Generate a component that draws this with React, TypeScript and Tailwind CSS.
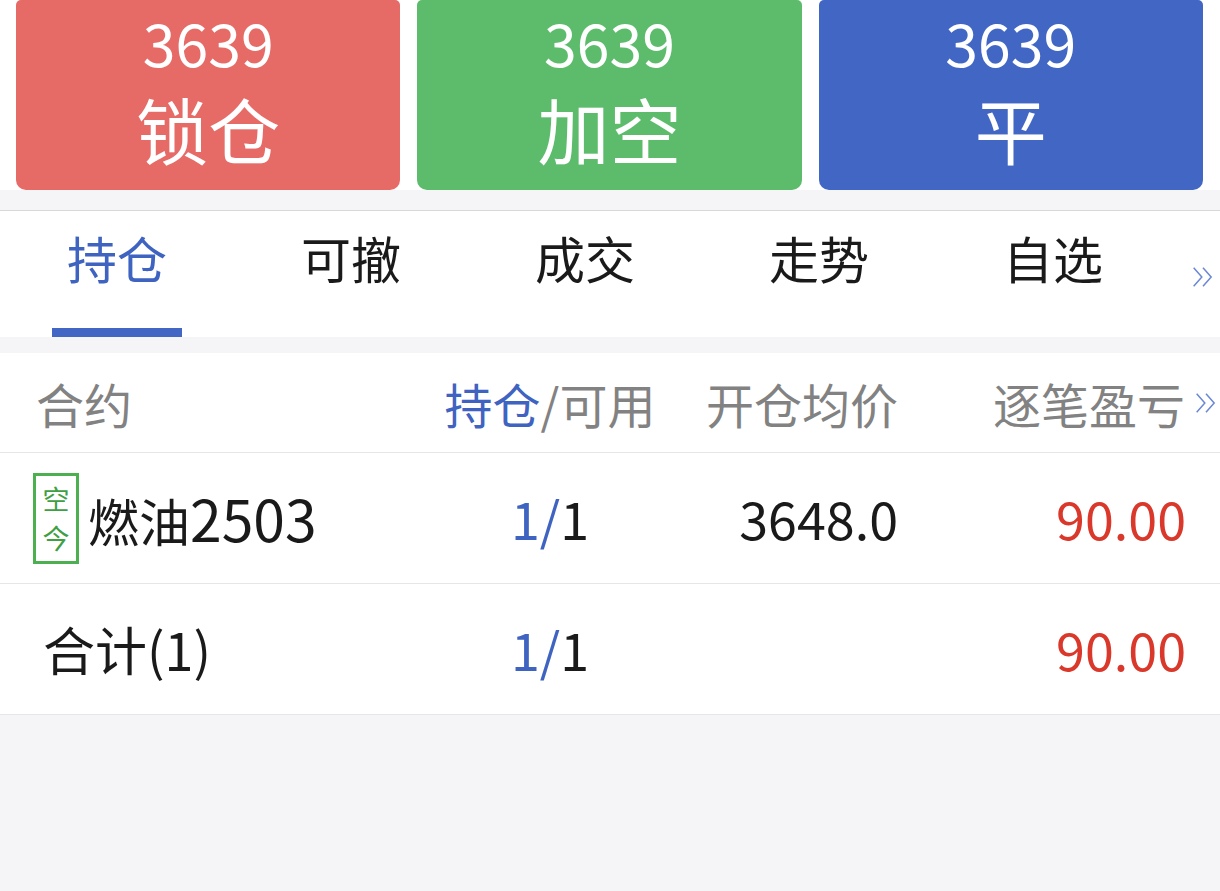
import React from 'react';

const FONT = "font-['Noto_Sans_CJK_SC','Noto_Sans',sans-serif]";

const actions = [
  { price: '3639', label: '锁仓', color: 'bg-[#e66a66]' },
  { price: '3639', label: '加空', color: 'bg-[#5cbc6c]' },
  { price: '3639', label: '平', color: 'bg-[#4166c4]' },
];

const tabs = ['持仓', '可撤', '成交', '走势', '自选'];

const DoubleChevron: React.FC<{ className?: string }> = ({ className }) => (
  <svg viewBox="0 0 24 24" className={className} fill="none" stroke="currentColor" strokeWidth={1.3}>
    <path d="M4 4l7 8-7 8" />
    <path d="M12 4l7 8-7 8" />
  </svg>
);

const Split: React.FC = () => (
  <span>
    <span className="text-[#3f63c0]">1/</span>
    <span>1</span>
  </span>
);

export default function App() {
  return (
    <div className={`${FONT} w-[1220px] h-[891px] bg-[#f5f5f7] overflow-hidden`}>
      {/* trade buttons */}
      <div className="h-[190px] bg-white flex gap-[17px] pl-4 pr-[17px]">
        {actions.map((a) => (
          <div
            key={a.label}
            className={`flex-1 h-[190px] ${a.color} rounded-b-[10px] rounded-t-[5px] flex flex-col items-center text-white`}
          >
            <div className="text-[59px] leading-[60px] mt-[12px]">{a.price}</div>
            <div className="text-[72px] leading-[72px] mt-[20px]">{a.label}</div>
          </div>
        ))}
      </div>

      {/* tabs */}
      <div className="mt-[20px] border-t border-[#d8d8d8] h-[127px] bg-white flex items-stretch">
        {tabs.map((t, i) => (
          <div key={t} className="w-[234px] flex flex-col items-center">
            <div
              className={`text-[50px] leading-none mt-[21px] ${i === 0 ? 'text-[#3f63c0]' : 'text-[#1a1a1a]'}`}
            >
              {t}
            </div>
            {i === 0 && <div className="mt-auto w-[130px] h-[9px] bg-[#4166c4]" />}
          </div>
        ))}
        <div className="flex-1 flex items-center justify-end pr-[3px] pt-[6px]">
          <DoubleChevron className="w-[28px] h-[28px] text-[#6a88d4]" />
        </div>
      </div>

      {/* table */}
      <div className="mt-[16px] bg-white">
        <div className="h-[100px] flex items-center border-b border-[#e6e6e6] text-[48px] text-[#828282]">
          <div className="w-[430px] pl-[36px]">合约</div>
          <div className="w-[240px] text-center">
            <span className="text-[#3f63c0]">持仓</span>/可用
          </div>
          <div className="w-[228px] text-right">开仓均价</div>
          <div className="w-[287px] text-right">逐笔盈亏</div>
          <DoubleChevron className="ml-[7px] w-[28px] h-[28px] text-[#6a88d4]" />
        </div>

        <div className="h-[131px] flex items-center border-b border-[#e6e6e6] text-[52px] text-[#1a1a1a]">
          <div className="w-[430px] pl-[33px] flex items-center">
            <div className="w-[46px] h-[91px] border-[3px] border-[#4caf50] flex flex-col items-center justify-center text-[#3f9f45] text-[27px] leading-[39px]">
              <span>空</span>
              <span>今</span>
            </div>
            <span className="ml-[9px] text-[51px]">
              燃油<span className="text-[57px]">2503</span>
            </span>
          </div>
          <div className="w-[240px] text-center">
            <Split />
          </div>
          <div className="w-[228px] text-right">3648.0</div>
          <div className="w-[288px] text-right text-[#d9382b]">90.00</div>
        </div>

        <div className="h-[131px] flex items-center border-b border-[#e6e6e6] text-[52px] text-[#1a1a1a]">
          <div className="w-[430px] pl-[43px]">合计(1)</div>
          <div className="w-[240px] text-center">
            <Split />
          </div>
          <div className="w-[228px] text-right" />
          <div className="w-[288px] text-right text-[#d9382b]">90.00</div>
        </div>
      </div>
    </div>
  );
}
